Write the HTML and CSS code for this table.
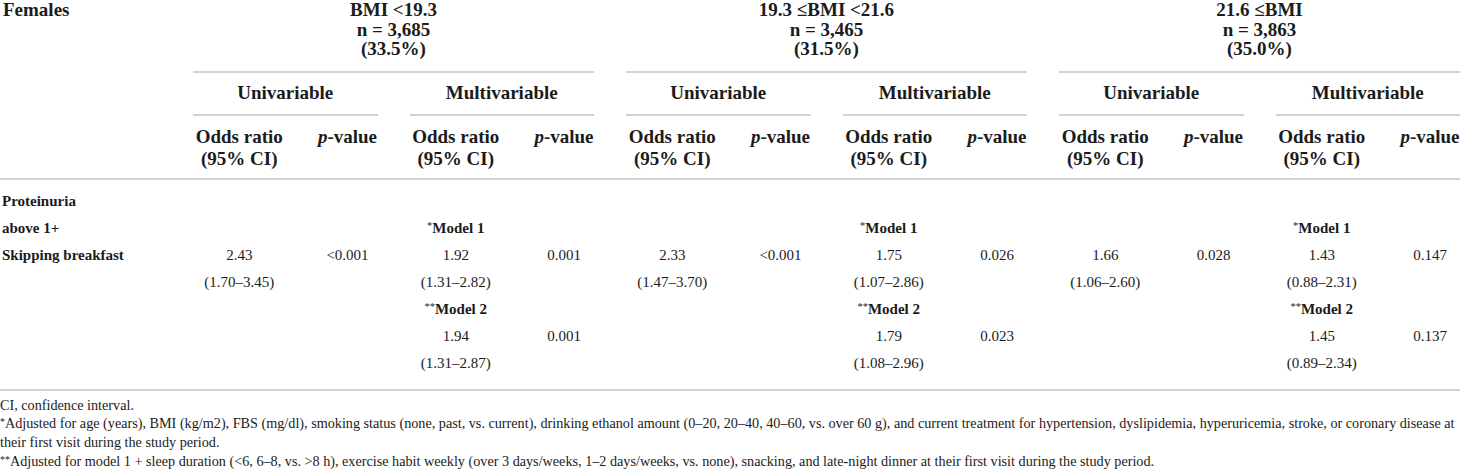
FILE: index.html
```html
<!DOCTYPE html>
<html lang="en">
<head>
  <meta charset="UTF-8">
  <meta name="viewport" content="width=device-width, initial-scale=1.0">
  <title>Skipping breakfast and proteinuria by BMI (females)</title>
  <link rel="stylesheet" href="styles.css">
</head>
<body>
  <div class="table">
    <div class="row head groups">
      <div class="label">Females</div>
      <div class="group g1">BMI &lt;19.3<br>n = 3,685<br>(33.5%)</div>
      <div class="group g2">19.3 ≤BMI &lt;21.6<br>n = 3,465<br>(31.5%)</div>
      <div class="group g3">21.6 ≤BMI<br>n = 3,863<br>(35.0%)</div>
    </div>

    <div class="row head models">
      <div class="span s1">Univariable</div>
      <div class="span s2">Multivariable</div>
      <div class="span s3">Univariable</div>
      <div class="span s4">Multivariable</div>
      <div class="span s5">Univariable</div>
      <div class="span s6">Multivariable</div>
    </div>

    <div class="row head cols">
      <div class="c1">Odds ratio<br>(95% CI)</div>
      <div class="c2"><i>p</i>-value</div>
      <div class="c3">Odds ratio<br>(95% CI)</div>
      <div class="c4"><i>p</i>-value</div>
      <div class="c5">Odds ratio<br>(95% CI)</div>
      <div class="c6"><i>p</i>-value</div>
      <div class="c7">Odds ratio<br>(95% CI)</div>
      <div class="c8"><i>p</i>-value</div>
      <div class="c9">Odds ratio<br>(95% CI)</div>
      <div class="c10"><i>p</i>-value</div>
      <div class="c11">Odds ratio<br>(95% CI)</div>
      <div class="c12"><i>p</i>-value</div>
    </div>

    <div class="body">
      <div class="row data">
        <div class="label">Proteinuria</div>
      </div>
      <div class="row data">
        <div class="label">above 1+</div>
        <div class="c3 model"><span class="mark">*</span>Model 1</div>
        <div class="c7 model"><span class="mark">*</span>Model 1</div>
        <div class="c11 model"><span class="mark">*</span>Model 1</div>
      </div>
      <div class="row data">
        <div class="label">Skipping breakfast</div>
        <div class="c1">2.43</div>
        <div class="c2">&lt;0.001</div>
        <div class="c3">1.92</div>
        <div class="c4">0.001</div>
        <div class="c5">2.33</div>
        <div class="c6">&lt;0.001</div>
        <div class="c7">1.75</div>
        <div class="c8">0.026</div>
        <div class="c9">1.66</div>
        <div class="c10">0.028</div>
        <div class="c11">1.43</div>
        <div class="c12">0.147</div>
      </div>
      <div class="row data">
        <div class="c1">(1.70–3.45)</div>
        <div class="c3">(1.31–2.82)</div>
        <div class="c5">(1.47–3.70)</div>
        <div class="c7">(1.07–2.86)</div>
        <div class="c9">(1.06–2.60)</div>
        <div class="c11">(0.88–2.31)</div>
      </div>
      <div class="row data">
        <div class="c3 model"><span class="mark">**</span>Model 2</div>
        <div class="c7 model"><span class="mark">**</span>Model 2</div>
        <div class="c11 model"><span class="mark">**</span>Model 2</div>
      </div>
      <div class="row data">
        <div class="c3">1.94</div>
        <div class="c4">0.001</div>
        <div class="c7">1.79</div>
        <div class="c8">0.023</div>
        <div class="c11">1.45</div>
        <div class="c12">0.137</div>
      </div>
      <div class="row data">
        <div class="c3">(1.31–2.87)</div>
        <div class="c7">(1.08–2.96)</div>
        <div class="c11">(0.89–2.34)</div>
      </div>
    </div>
  </div>

  <div class="notes">
    <p>CI, confidence interval.</p>
    <p><span class="mark">*</span>Adjusted for age (years), BMI (kg/m2), FBS (mg/dl), smoking status (none, past, vs. current), drinking ethanol amount (0–20, 20–40, 40–60, vs. over 60 g), and current treatment for hypertension, dyslipidemia, hyperuricemia, stroke, or coronary disease at<br>their first visit during the study period.</p>
    <p><span class="mark">**</span>Adjusted for model 1 + sleep duration (&lt;6, 6–8, vs. &gt;8 h), exercise habit weekly (over 3 days/weeks, 1–2 days/weeks, vs. none), snacking, and late-night dinner at their first visit during the study period.</p>
  </div>
</body>
</html>
```

FILE: styles.css
```css
body {
  margin: 0;
  background: #fff;
  color: #1b1b1b;
  font-family: "Liberation Serif", Tinos, "Times New Roman", "DejaVu Serif", serif;
}
.row {
  display: grid;
  grid-template-columns: 161px repeat(6, 92.5px 60px);
  column-gap: 32px;
  text-align: center;
}
.label {
  grid-column: 1;
  text-align: left;
  padding-left: 2px;
}
.head {
  font-weight: bold;
  font-size: 19px;
}
.head i {
  font-style: italic;
}

.groups {
  line-height: 19.5px;
}
.groups .label {
  padding-left: 3px;
}
.group {
  padding-bottom: 12px;
  border-bottom: 2px solid #d2d2d2;
}
.g1 { grid-column: 2 / 6; }
.g2 { grid-column: 6 / 10; }
.g3 { grid-column: 10 / 14; }

.models {
  line-height: 20.5px;
}
.span {
  padding: 10.5px 0 10px;
  border-bottom: 2px solid #d2d2d2;
}
.s1 { grid-column: 2 / 4; }
.s2 { grid-column: 4 / 6; }
.s3 { grid-column: 6 / 8; }
.s4 { grid-column: 8 / 10; }
.s5 { grid-column: 10 / 12; }
.s6 { grid-column: 12 / 14; }

.cols {
  line-height: 22px;
  padding: 10px 0 8px;
  border-bottom: 2px solid #d2d2d2;
}

.c1 { grid-column: 2; }
.c2 { grid-column: 3; }
.c3 { grid-column: 4; }
.c4 { grid-column: 5; }
.c5 { grid-column: 6; }
.c6 { grid-column: 7; }
.c7 { grid-column: 8; }
.c8 { grid-column: 9; }
.c9 { grid-column: 10; }
.c10 { grid-column: 11; }
.c11 { grid-column: 12; }
.c12 { grid-column: 13; }

.body {
  padding: 8px 0 12px;
  border-bottom: 2px solid #d2d2d2;
}
.data {
  font-size: 15px;
  line-height: 27px;
}
.data .label,
.model {
  font-weight: bold;
}
.mark {
  font-weight: normal;
  font-size: 0.7em;
  vertical-align: 0.35em;
  line-height: 0;
}

.notes {
  font-size: 14.2px;
  line-height: 18.7px;
  padding-top: 5px;
  white-space: nowrap;
}
.notes p {
  margin: 0;
}
```
